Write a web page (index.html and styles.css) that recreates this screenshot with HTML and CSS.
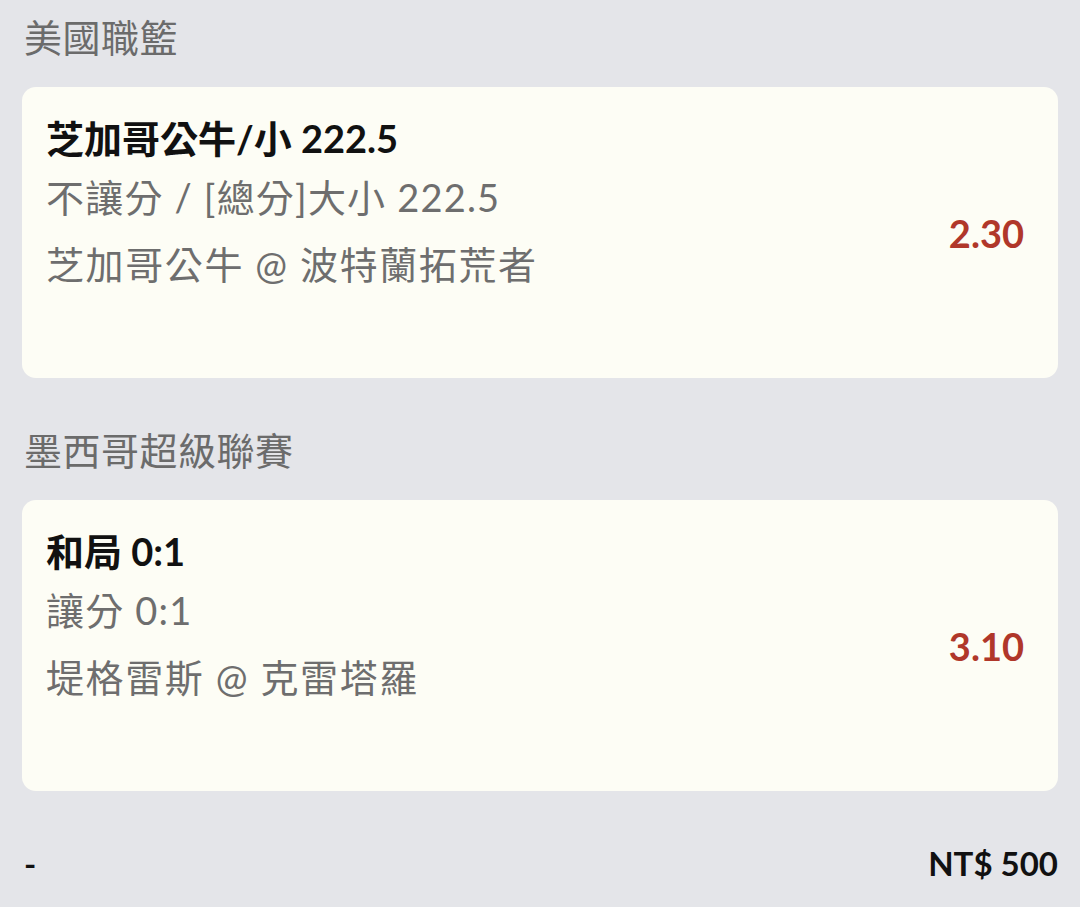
FILE: index.html
```html
<!DOCTYPE html>
<html lang="zh-Hant">
  <head>
    <meta charset="UTF-8" />
    <meta name="viewport" content="width=device-width, initial-scale=1.0" />
    <title>投注單</title>
    <link rel="stylesheet" href="styles.css">
  </head>
  <body>
    <div id="slip">
      <div class="league">
        <div class="league-name">美國職籃</div>
        <div class="bet">
          <div class="bet-info">
            <div class="bet-title">芝加哥公牛/小 222.5</div>
            <div class="bet-market">不讓分 / [總分]大小 222.5</div>
            <div class="bet-match">芝加哥公牛 @ 波特蘭拓荒者</div>
          </div>
          <div class="bet-odds">2.30</div>
        </div>
      </div>

      <div class="league">
        <div class="league-name">墨西哥超級聯賽</div>
        <div class="bet">
          <div class="bet-info">
            <div class="bet-title">和局 0:1</div>
            <div class="bet-market">讓分 0:1</div>
            <div class="bet-match">堤格雷斯 @ 克雷塔羅</div>
          </div>
          <div class="bet-odds">3.10</div>
        </div>
      </div>

      <div id="total">
        <span class="total-label">-</span>
        <span class="total-amount">NT$ 500</span>
      </div>
    </div>
  </body>
</html>
```

FILE: styles.css
```css
html,
body {
  margin: 0;
  padding: 0;
  background-color: #e4e5e9;
}

body {
  font-family: Lato, "Noto Sans CJK TC", sans-serif;
  font-size: 38px;
  color: #111111;
}

#slip {
  padding: 0 22px 0 22px;
}

.league {
  margin-bottom: 35px;
}

.league-name {
  line-height: 74px;
  margin-bottom: 13px;
  padding-left: 2px;
  letter-spacing: 0.5px;
  color: #6b6b6b;
}

.bet {
  display: flex;
  align-items: center;
  justify-content: space-between;
  box-sizing: border-box;
  min-height: 291px;
  padding: 25px 34px 25px 24px;
  background-color: #fdfdf5;
  border-radius: 14px;
}

.bet-info {
  align-self: flex-start;
}

.bet-title {
  font-weight: bold;
  line-height: 52px;
}

.bet-market {
  margin-top: 5px;
  line-height: 56px;
  letter-spacing: 1.2px;
  color: #6e6e6e;
}

.bet-match {
  margin-top: 11px;
  line-height: 56px;
  letter-spacing: 1.6px;
  color: #6e6e6e;
}

.bet-odds {
  font-weight: bold;
  font-size: 38px;
  color: #b0372a;
}

#total {
  display: flex;
  justify-content: space-between;
  align-items: center;
  margin-top: 4px;
  line-height: 74px;
  font-weight: bold;
  font-size: 33px;
}

.total-label {
  padding-left: 2px;
}
```
